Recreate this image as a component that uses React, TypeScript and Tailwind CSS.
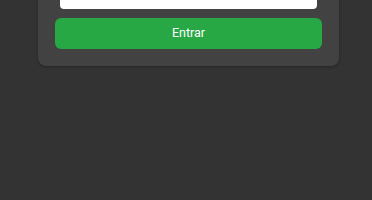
export default function App() {
  return (
    <div className="h-[200px] overflow-hidden bg-[#333333] font-['Roboto',sans-serif]">
      <div className="ml-[38px] -mt-[48px] w-[301px] rounded-lg bg-[#424242] px-[17px] pt-[17px] pb-[17px] shadow-sm shadow-black/20">
        <input
          type="password"
          className="mx-[5px] block h-[40px] w-[257px] rounded bg-white px-3 text-sm outline-none"
        />
        <button className="mt-[9px] flex h-[31px] w-full items-center justify-center rounded-md bg-[#28a745] text-[12.5px] text-white">
          Entrar
        </button>
      </div>
    </div>
  );
}
